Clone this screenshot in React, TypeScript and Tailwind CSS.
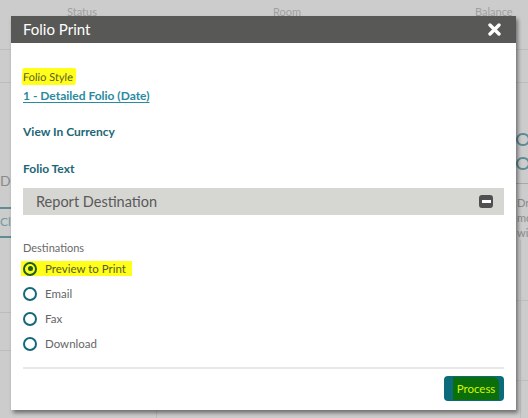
import React from "react";

const FONT = { fontFamily: 'Lato, "Open Sans", Arial, sans-serif' };

const DESTINATIONS = [
  { label: "Preview to Print", selected: true },
  { label: "Email" },
  { label: "Fax" },
  { label: "Download" },
];

function Radio({ selected }: { selected?: boolean }) {
  if (selected) {
    return (
      <span className="w-[14px] h-[14px] rounded-full border-2 border-[#1d5a1f] flex items-center justify-center flex-shrink-0">
        <span className="w-[5px] h-[5px] rounded-full bg-[#1d5a1f]" />
      </span>
    );
  }
  return <span className="w-[14px] h-[14px] rounded-full border-2 border-[#13697a] flex-shrink-0" />;
}

function Backdrop() {
  return (
    <div className="absolute inset-0 bg-[#cccccc]">
      {/* header labels of the page behind */}
      <div className="flex pt-[5px] h-[26px] text-[11px] leading-[14px] text-[#a0a0a0]">
        <span className="ml-[67px]">Status</span>
        <span className="ml-[176px]">Room</span>
        <span className="ml-[174px]">Balance</span>
      </div>
      <div className="h-[24px] border-b border-[#bdbdbd]" />
      <div className="h-[33px] border-b border-[#bdbdbd]" />
      {/* left edge bits */}
      <div className="absolute left-0 top-[174px] w-[11px] text-[14px] text-[#8a8a8a] leading-none">D</div>
      <div className="absolute left-0 top-[207px] w-[11px] h-[2px] bg-[#5f8d94]" />
      <div className="absolute left-0 top-[216px] w-[11px] text-[12px] text-[#6f9aa0] leading-none overflow-hidden">Cl</div>
      <div className="absolute left-0 top-[236px] w-[11px] h-[2px] bg-[#5f8d94]" />
      <div className="absolute left-0 top-[312px] w-[11px] h-px bg-[#bdbdbd]" />
      <div className="absolute left-0 top-[350px] w-[11px] h-px bg-[#bdbdbd]" />
      {/* right edge bits */}
      <div className="absolute left-[516px] top-[133px] w-[14px] h-[13px] rounded-full border-2 border-[#5c8c93]" />
      <div className="absolute left-[516px] top-[157px] w-[14px] h-[13px] rounded-full border-2 border-[#5c8c93]" />
      <div className="absolute left-[516px] top-[183px] w-[12px] h-px bg-[#a9a9a9]" />
      <div className="absolute left-[517px] top-[195px] w-[11px] overflow-hidden text-[11px] leading-[15px] text-[#8a8a8a]">
        Dr
        <br />
        mo
        <br />
        wi
      </div>
      <div className="absolute left-[520px] top-[240px] w-px h-[178px] bg-[#bdbdbd]" />
      <div className="absolute left-[516px] top-[300px] w-[12px] h-px bg-[#bdbdbd]" />
      <div className="absolute left-[516px] top-[380px] w-[12px] h-px bg-[#bdbdbd]" />
      <div className="absolute left-[156px] top-[408px] w-px h-[10px] bg-[#bdbdbd]" />
    </div>
  );
}

export default function App() {
  return (
    <div className="relative w-[528px] h-[418px] overflow-hidden" style={FONT}>
      <Backdrop />

      {/* Folio Print dialog */}
      <div className="absolute left-[11px] top-[16px] w-[505px] h-[394px] bg-white flex flex-col shadow-[2px_3px_4px_rgba(0,0,0,0.45)]">
        <div className="h-[27px] bg-[#585856] flex items-center justify-between pl-[12px] pr-[15px]">
          <span className="text-white text-[15px] leading-none">Folio Print</span>
          <svg width="13" height="13" viewBox="0 0 13 13">
            <path d="M2 2 L11 11 M11 2 L2 11" stroke="white" strokeWidth="3.4" strokeLinecap="round" />
          </svg>
        </div>

        <div className="flex flex-col px-[12px] pt-[25px]">
          <div className="h-[17px] flex items-center">
            <span className="bg-[#ffff1a] text-[#5b5a2c] text-[11px] leading-[17px] -ml-px pl-px pr-[3px] rounded-[2px] -skew-x-3">
              Folio Style
            </span>
          </div>
          <a className="mt-[3px] h-[16px] leading-[16px] text-[12px] font-bold text-[#2a8aa0] underline underline-offset-2 self-start">
            1 - Detailed Folio (Date)
          </a>

          <div className="mt-[20px] h-[16px] leading-[16px] text-[12px] font-bold text-[#1c6676]">
            View In Currency
          </div>
          <div className="mt-[21px] h-[16px] leading-[16px] text-[12px] font-bold text-[#1c6676]">
            Folio Text
          </div>

          <div className="mt-[11px] h-[27px] bg-[#d6d6d3] flex items-center justify-between pl-[13px] pr-[11px]">
            <span className="text-[14.5px] text-[#5a5a5a]">Report Destination</span>
            <span className="w-[14px] h-[13px] rounded-[3px] bg-[#505050] flex items-center justify-center">
              <span className="w-[9px] h-[3px] bg-white" />
            </span>
          </div>

          <div className="mt-[25px] h-[16px] leading-[16px] text-[11px] text-[#6a6a6a]">Destinations</div>

          <div className="flex flex-col">
            {DESTINATIONS.map((d) => (
              <div key={d.label} className="h-[25px] flex items-center">
                {d.selected ? (
                  <span className="flex items-center gap-[8px] bg-[#ffff1a] -ml-[2px] pl-[2px] pr-[6px] h-[15px]">
                    <Radio selected />
                    <span className="text-[11.5px] text-[#5b5a2c]">{d.label}</span>
                  </span>
                ) : (
                  <span className="flex items-center gap-[8px]">
                    <Radio />
                    <span className="text-[11.5px] text-[#666666]">{d.label}</span>
                  </span>
                )}
              </div>
            ))}
          </div>

          <div className="mt-[11px] h-[2px] bg-[#e8e8e8]" />

          <div className="mt-[7px] flex justify-end">
            <button className="w-[60px] h-[25px] rounded-[4px] bg-[#0b6b7a] flex items-center justify-end pr-[5px]">
              <span className="h-[23px] w-[46px] bg-[#0a6f0a] rounded-tr-[6px] flex items-center justify-center text-[11.5px] text-[#d8f500]">
                Process
              </span>
            </button>
          </div>
        </div>
      </div>
    </div>
  );
}
